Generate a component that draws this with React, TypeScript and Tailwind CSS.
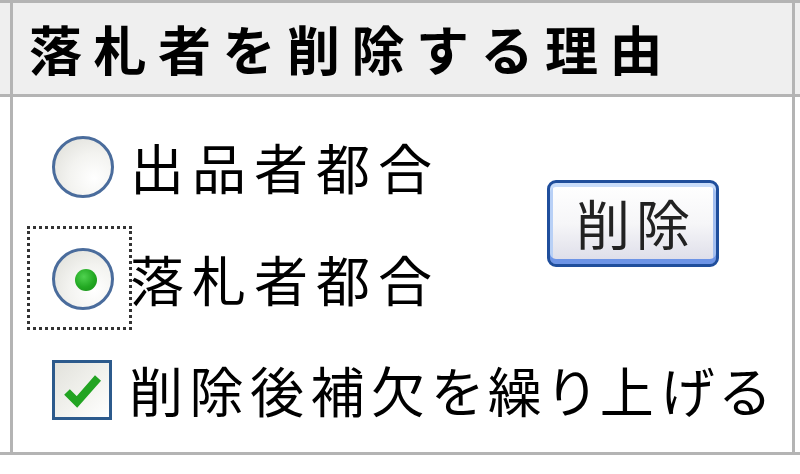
import React from 'react';

const jp = "font-['Noto_Sans_CJK_JP','Noto_Sans_CJK_SC',sans-serif]";

const Radio: React.FC<{ checked?: boolean; focused?: boolean }> = ({ checked, focused }) => (
  <div className="relative w-[62px] h-[62px] shrink-0">
    <div className="w-full h-full rounded-full border-[3px] border-[#4a6c9c] bg-[radial-gradient(circle_at_70%_70%,#ffffff_0%,#f3f3f0_45%,#dcdcd6_100%)] flex items-center justify-center">
      {checked && (
        <div className="w-[22px] h-[22px] rounded-full bg-[radial-gradient(circle_at_40%_35%,#4fd24f_0%,#22a822_55%,#178a17_100%)] translate-x-[3px] translate-y-[1px]" />
      )}
    </div>
    {focused && (
      <div className="absolute left-[-25px] top-[-22px] w-[105px] h-[104px] border-[3px] border-dotted border-[#333]" />
    )}
  </div>
);

const Checkbox: React.FC = () => (
  <div className="w-[60px] h-[60px] shrink-0 border-[3px] border-[#2c5a8c] bg-[linear-gradient(135deg,#e2e2dc_0%,#f4f4f0_60%,#ffffff_100%)]">
    <svg width="54" height="54" viewBox="0 0 54 54">
      <path d="M12 29 L22 39 L43 15" fill="none" stroke="#22a422" strokeWidth="8" strokeLinejoin="miter" strokeLinecap="butt" />
    </svg>
  </div>
);

export default function App() {
  return (
    <div className={`w-[800px] h-[474px] bg-white overflow-hidden text-black ${jp}`}>
      <div className="h-[3px] bg-[#b4b4b4]" />
      {/* header row */}
      <div className="flex h-[94px] bg-[#efefef] border-b-[3px] border-[#b4b4b4]">
        <div className="w-[10px]" />
        <div className="flex-1 border-l-[3px] border-r-[3px] border-[#b4b4b4] flex items-center pl-[16px]">
          <span className="text-[53px] font-bold tracking-[11.5px] leading-none">落札者を削除する理由</span>
        </div>
        <div className="w-[5px]" />
      </div>
      {/* body row */}
      <div className="flex h-[358px] border-b-[3px] border-[#b4b4b4]">
        <div className="w-[10px]" />
        <div className="flex-1 border-l-[3px] border-r-[3px] border-[#b4b4b4] pl-[39px] pt-[14px] flex flex-col [font-feature-settings:'palt']">
          <div className="flex items-center">
            <div className="w-[495px] flex flex-col">
              <div className="h-[112px] flex items-center gap-[16px]">
                <Radio />
                <span className="text-[54px] tracking-[8px] leading-none">出品者都合</span>
              </div>
              <div className="h-[112px] flex items-center gap-[16px]">
                <Radio checked focused />
                <span className="text-[54px] tracking-[8px] leading-none">落札者都合</span>
              </div>
            </div>
            <button className="w-[172px] h-[87px] rounded-[9px] border-[3px] border-[#1f4e9c] bg-[linear-gradient(180deg,#ffffff_0%,#f6f6f8_50%,#dcdce8_100%)] shadow-[inset_0_4px_0_#c8dcfa,inset_0_-5px_0_#6d94e6,inset_3px_0_0_#b8d0f6,inset_-3px_0_0_#a4bff0] flex items-center justify-center text-[54px] tracking-[6px] leading-none text-[#222] pl-[6px]">
              削除
            </button>
          </div>
          <div className="h-[110px] flex items-center gap-[17px]">
            <Checkbox />
            <span className="text-[54px] tracking-[6.5px] leading-none">削除後補欠を繰り上げる</span>
          </div>
        </div>
        <div className="w-[5px]" />
      </div>
    </div>
  );
}
